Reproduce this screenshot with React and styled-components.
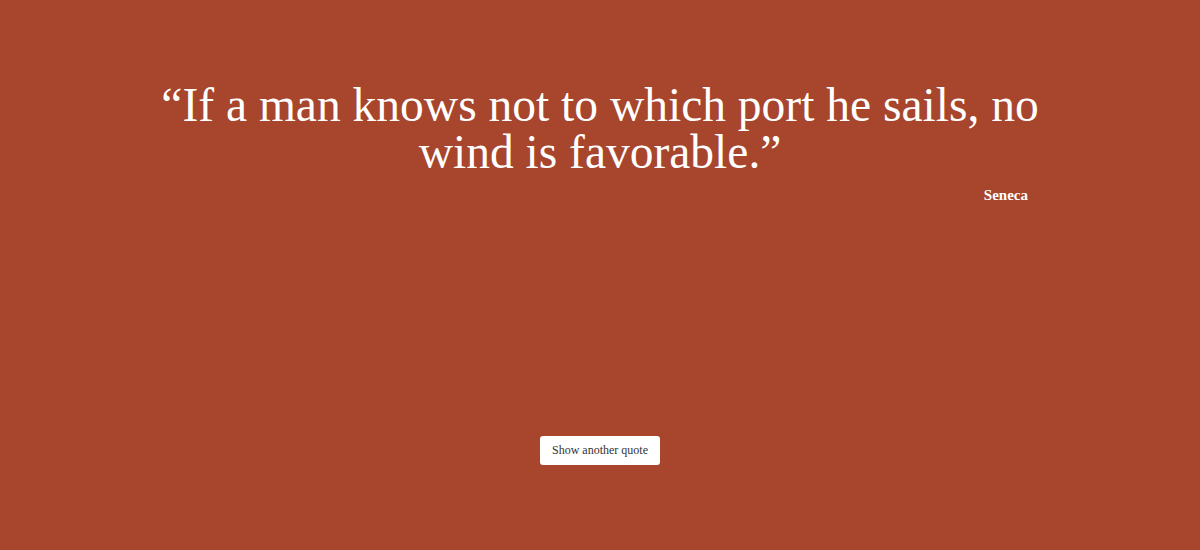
import React, { useState } from 'react'
import styled, { createGlobalStyle } from 'styled-components'

const GlobalStyle = createGlobalStyle`
    body {
        margin: 0;
        background: #a7452d;
        font-family: 'Liberation Serif', 'DejaVu Serif', serif;
    }
`

const MainContainer = styled.main`
    min-height: 100vh;
    display: flex;
    flex-direction: column;
    align-items: center;
    color: #ffffff;
`

const QuoteContainer = styled.figure`
    width: 890px;
    margin: 82px 0 0;
    display: flex;
    flex-direction: column;
`

const QuoteText = styled.blockquote`
    margin: 0;
    font-size: 47.5px;
    line-height: 47px;
    text-align: center;
`

const Author = styled.figcaption`
    align-self: flex-end;
    margin: 11px 17px 0 0;
    font-size: 15px;
    font-weight: bold;
`

const NextButton = styled.button`
    margin-top: 232px;
    height: 29px;
    padding: 0 12px;
    border: none;
    border-radius: 3px;
    background: #ffffff;
    color: #333333;
    font-family: 'Liberation Serif', 'DejaVu Serif', serif;
    font-size: 12px;
    cursor: pointer;
`

const quotes = [
    { text: 'If a man knows not to which port he sails, no wind is favorable.', author: 'Seneca' },
]

export default function App() {
    const [index, setIndex] = useState(0)

    const nextQuote = () => {
        setIndex((index + 1) % quotes.length)
    }

    return (
        <MainContainer>
            <GlobalStyle />
            <QuoteContainer>
                <QuoteText>“{quotes[index].text}”</QuoteText>
                <Author>{quotes[index].author}</Author>
            </QuoteContainer>
            <NextButton onClick={nextQuote}>Show another quote</NextButton>
        </MainContainer>
    )
}
